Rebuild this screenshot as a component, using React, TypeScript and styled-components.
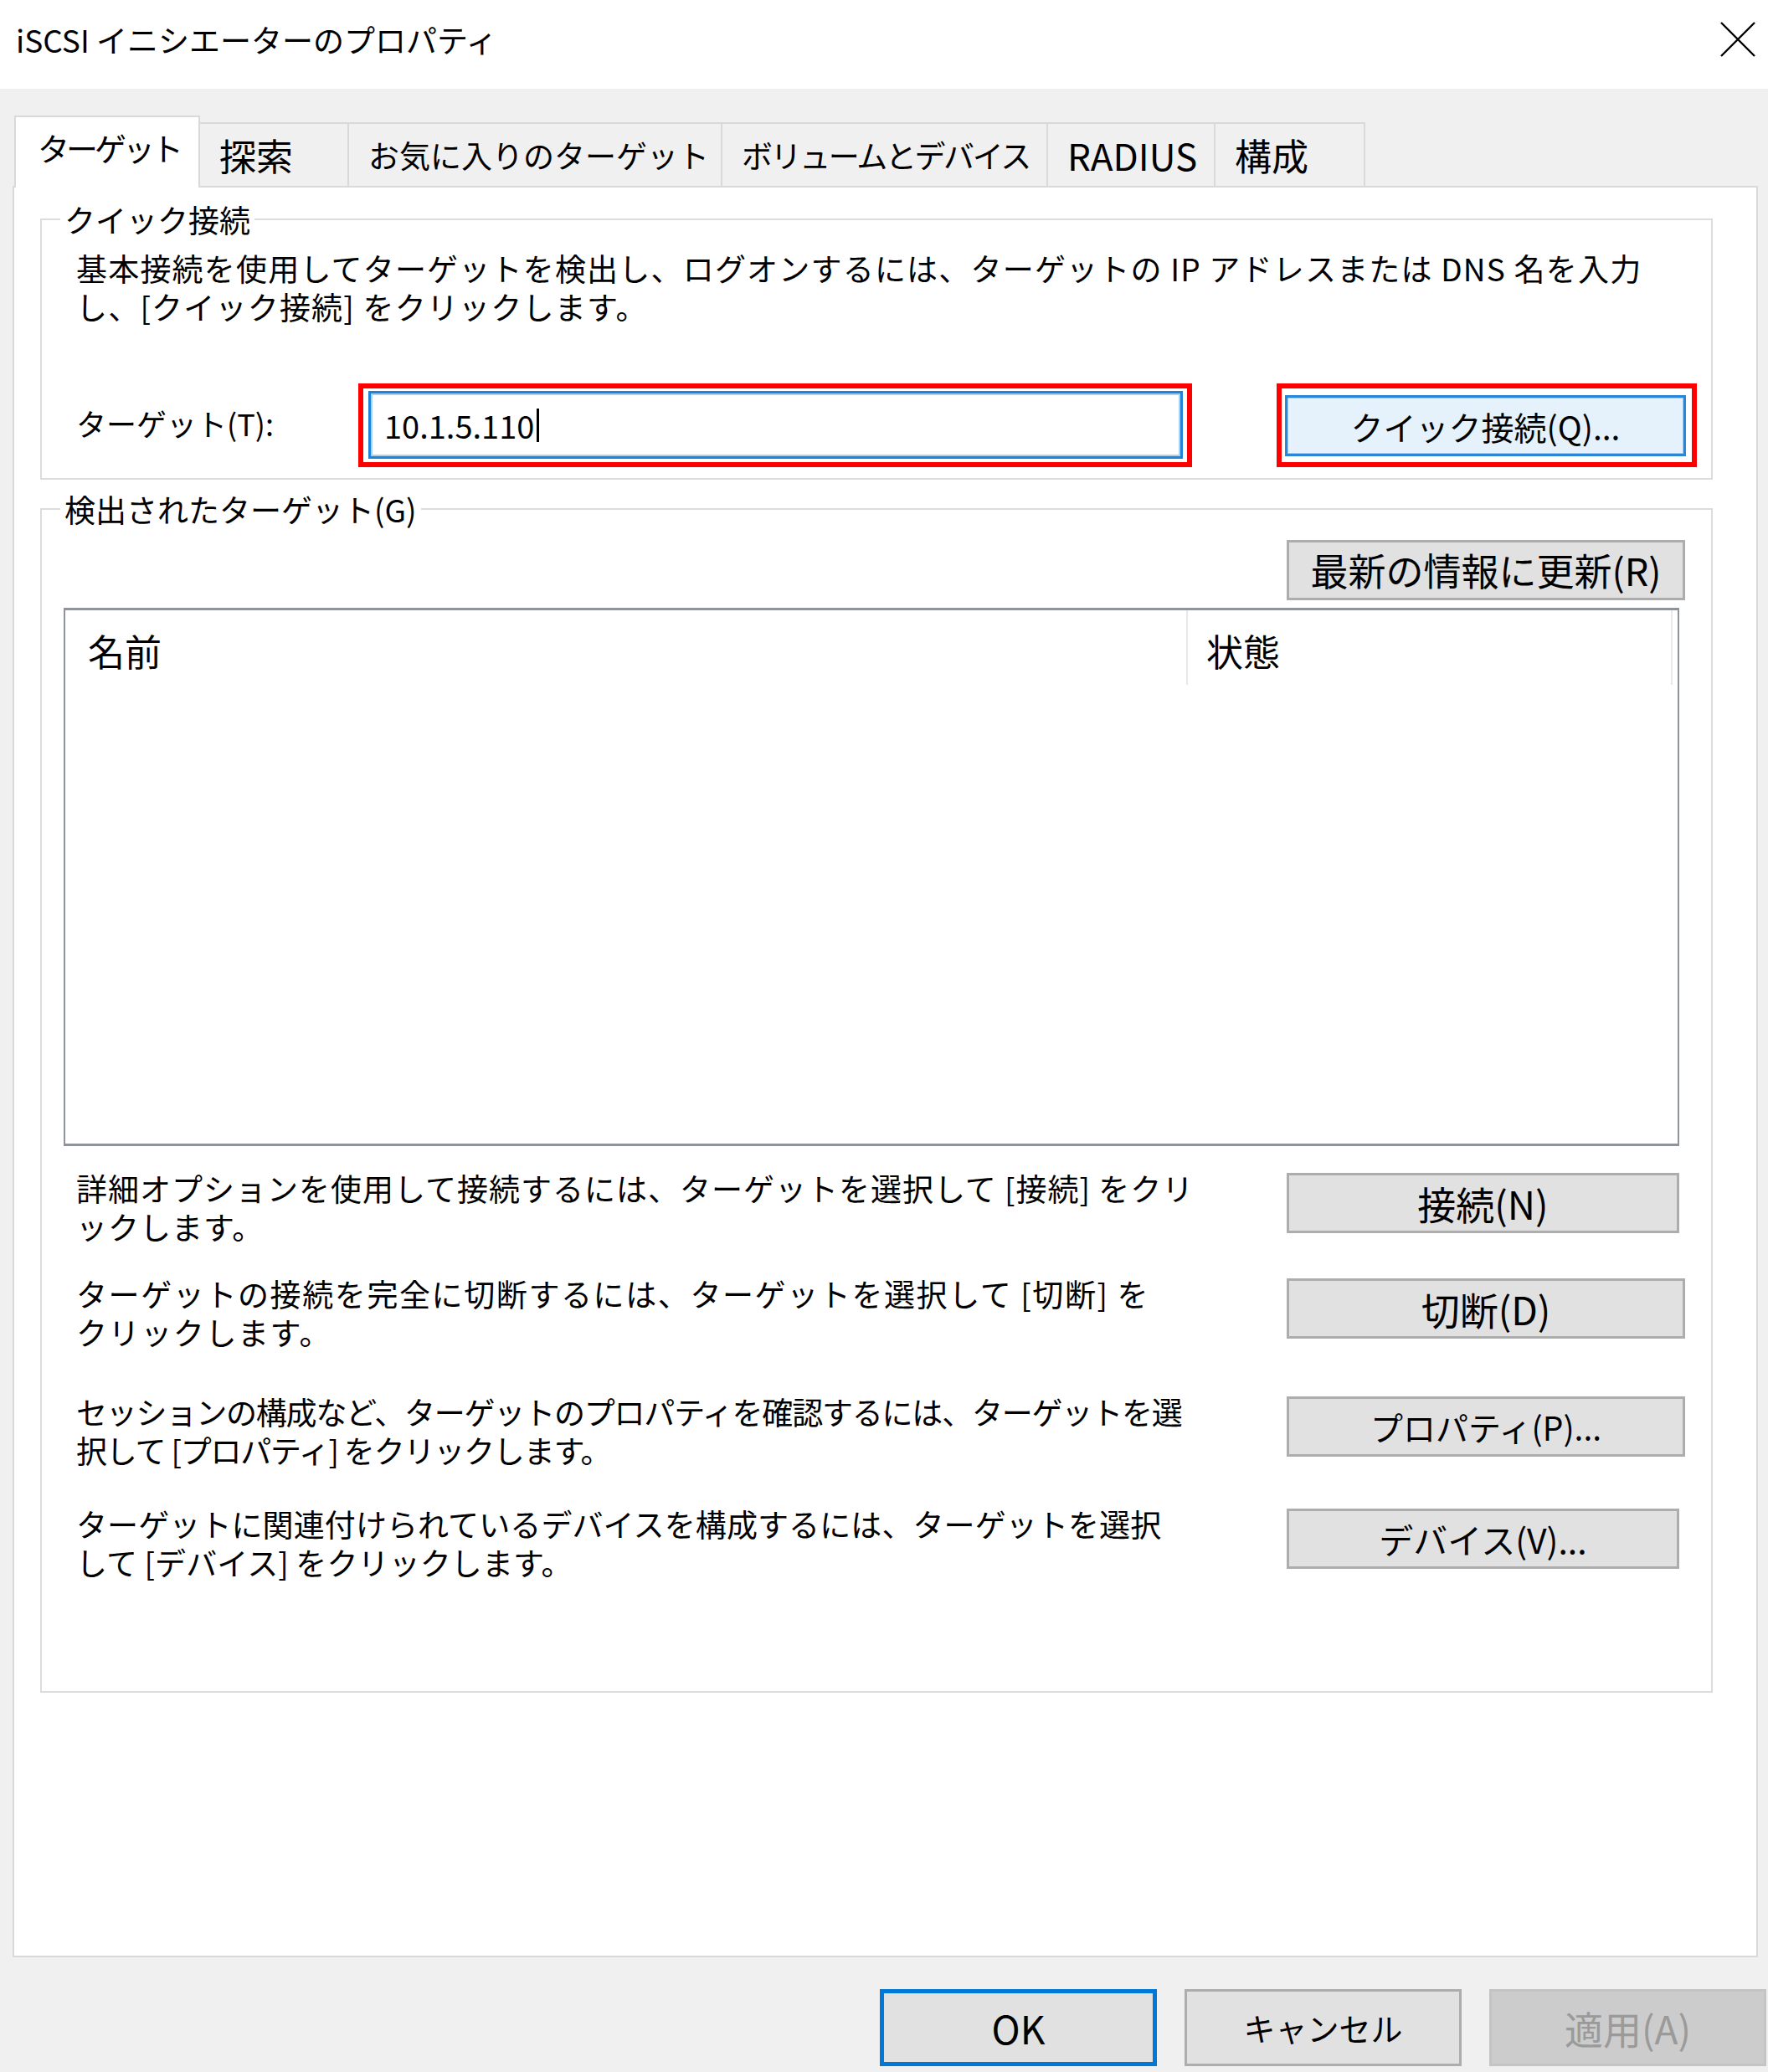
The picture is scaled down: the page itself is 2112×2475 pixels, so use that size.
import React from "react";
import styled, { createGlobalStyle, css } from "styled-components";

const FONT = `"Noto Sans CJK JP", "Noto Sans", sans-serif`;

const GlobalStyle = createGlobalStyle`
  html, body {
    margin: 0;
    padding: 0;
    background: #f0f0f0;
  }
  body {
    font-family: ${FONT};
    font-size: 37px;
    color: #000;
  }
  * { box-sizing: border-box; }
`;

const Window = styled.div`
  width: 2112px;
  height: 2475px;
  overflow: hidden;
  display: flex;
  flex-direction: column;
  background: #f0f0f0;
`;

const TitleBar = styled.div`
  height: 106px;
  flex: none;
  background: #ffffff;
  display: flex;
  align-items: center;
  justify-content: space-between;
  padding: 0 14px 12px 19px;
`;

const TitleText = styled.div`
  font-size: 37px;
  line-height: 46px;
  white-space: nowrap;
`;

const CloseIcon = styled.svg`
  width: 44px;
  height: 44px;
  display: block;
`;

const Body = styled.div`
  flex: 1;
  display: flex;
  flex-direction: column;
  padding: 32px 0 0 15px;
`;

const TabStrip = styled.div`
  display: flex;
  align-items: flex-end;
  padding-left: 2px;
  height: 84px;
`;

const Tab = styled.div<{ $active?: boolean; $w: number; $fs: number; $ls: number }>`
  width: ${(p) => p.$w}px;
  flex: none;
  display: flex;
  align-items: center;
  white-space: nowrap;
  overflow: hidden;
  font-size: ${(p) => p.$fs}px;
  line-height: 50px;
  letter-spacing: ${(p) => p.$ls}px;
  ${(p) =>
    p.$active
      ? css`
          height: 86px;
          margin-bottom: -2px;
          background: #ffffff;
          border: 2px solid #d9d9d9;
          border-bottom: none;
          padding: 0 0 12px 26px;
          position: relative;
          z-index: 1;
        `
      : css`
          height: 76px;
          background: #f0f0f0;
          border-top: 2px solid #d9d9d9;
          border-right: 2px solid #d9d9d9;
          padding: 0 0 0 23px;
        `}
`;

const Panel = styled.div`
  width: 2085px;
  height: 2116px;
  flex: none;
  background: #ffffff;
  border: 2px solid #d9d9d9;
  display: flex;
  flex-direction: column;
`;

const GroupBox = styled.fieldset<{ $mt: number; $pb: number }>`
  margin: ${(p) => p.$mt}px 0 0 31px;
  width: 1998px;
  padding: 0 0 ${(p) => p.$pb}px 0;
  border: 2px solid #dcdcdc;
  min-width: 0;
`;

const Legend = styled.legend`
  margin-left: 22px;
  padding: 0 5px;
  height: 46px;
  line-height: 46px;
  font-size: 37px;
  white-space: nowrap;
`;

const Paragraph = styled.div<{ $ls?: number; $mt: number }>`
  margin-top: ${(p) => p.$mt}px;
  padding-left: 41px;
  letter-spacing: ${(p) => p.$ls ?? 0}px;
`;

const TextLine = styled.div`
  height: 46px;
  line-height: 46px;
  font-size: 37px;
  white-space: nowrap;
`;

const InputRow = styled.div`
  margin-top: 69px;
  padding-left: 41px;
  display: flex;
  align-items: center;
`;

const FieldLabel = styled.div`
  width: 337px;
  flex: none;
  font-size: 36px;
  line-height: 46px;
  white-space: nowrap;
  margin-top: -6px;
`;

const HighlightFrame = styled.div<{ $w: number; $pad: string; $ml?: number }>`
  width: ${(p) => p.$w}px;
  height: 100px;
  flex: none;
  margin-left: ${(p) => p.$ml ?? 0}px;
  border: 6px solid #ff0000;
  padding: ${(p) => p.$pad};
  display: flex;
  background: #ffffff;
`;

const TextBox = styled.div`
  flex: 1;
  height: 100%;
  border: 3px solid #1f83d8;
  box-shadow: inset 0 0 0 2px #a9d1f3;
  background: #ffffff;
  display: flex;
  align-items: center;
  padding-left: 16px;
  line-height: 46px;
  font-size: 38px;
  white-space: nowrap;
`;

const Caret = styled.span`
  display: inline-block;
  width: 3px;
  height: 40px;
  margin-left: 3px;
  background: #000;
`;

type Variant = "normal" | "focus" | "primary" | "disabled";

const PushButton = styled.div<{ $variant?: Variant; $w: number; $h: number; $fs?: number }>`
  width: ${(p) => p.$w}px;
  height: ${(p) => p.$h}px;
  flex: none;
  display: flex;
  align-items: center;
  justify-content: center;
  white-space: nowrap;
  line-height: 50px;
  font-size: ${(p) => p.$fs ?? 46}px;
  ${(p) => {
    switch (p.$variant) {
      case "focus":
        return css`
          background: #e5f1fb;
          border: 3px solid #2a86d9;
          box-shadow: inset 0 0 0 1px #9fcbf1;
          color: #000;
        `;
      case "primary":
        return css`
          background: #e1e1e1;
          border: 5px solid #0078d7;
          color: #000;
        `;
      case "disabled":
        return css`
          background: #cccccc;
          border: 3px solid #c4c4c4;
          color: #9a9a9a;
        `;
      default:
        return css`
          background: #e1e1e1;
          border: 3px solid #adadad;
          color: #000;
        `;
    }
  }}
`;

const ToolbarRow = styled.div`
  margin-top: 14px;
  display: flex;
  justify-content: flex-end;
  padding-right: 31px;
`;

const ListView = styled.div`
  margin: 9px 0 0 26px;
  width: 1930px;
  height: 643px;
  border: 2px solid #8e939c;
  border-top-width: 3px;
  border-bottom-width: 3px;
  background: #ffffff;
`;

const ListHeader = styled.div`
  height: 89px;
  display: flex;
`;

const HeaderCell = styled.div<{ $w: number; $pl: number }>`
  width: ${(p) => p.$w}px;
  flex: none;
  height: 100%;
  padding: 6px 0 0 ${(p) => p.$pl}px;
  border-right: 2px solid #e8e8e8;
  display: flex;
  align-items: center;
  font-size: 44px;
  line-height: 50px;
  white-space: nowrap;
`;

const ActionRow = styled.div<{ $mt: number }>`
  margin-top: ${(p) => p.$mt}px;
  padding-left: 41px;
  display: flex;
  align-items: flex-start;
`;

const ActionText = styled.div<{ $ls?: number }>`
  width: 1446px;
  flex: none;
  letter-spacing: ${(p) => p.$ls ?? 0}px;
`;

const ActionButtonSlot = styled.div`
  margin-top: 5px;
`;

const Footer = styled.div`
  margin-top: 38px;
  display: flex;
  justify-content: flex-end;
  gap: 33px;
  padding-right: 2px;
`;

const tabs = [
  { label: "ターゲット", w: 222, fs: 38, ls: -4, active: true },
  { label: "探索", w: 178, fs: 44, ls: 0 },
  { label: "お気に入りのターゲット", w: 446, fs: 37, ls: 0 },
  { label: "ボリュームとデバイス", w: 389, fs: 37, ls: -2.4 },
  { label: "RADIUS", w: 200, fs: 44, ls: 0 },
  { label: "構成", w: 179, fs: 44, ls: 0 },
];

const actions = [
  {
    lines: ["詳細オプションを使用して接続するには、ターゲットを選択して [接続] をクリ", "ックします。"],
    button: "接続(N)",
    w: 469,
    fs: 46,
    mt: 27,
    ls: 1,
  },
  {
    lines: ["ターゲットの接続を完全に切断するには、ターゲットを選択して [切断] を", "クリックします。"],
    button: "切断(D)",
    w: 476,
    fs: 46,
    mt: 34,
    ls: 1.6,
  },
  {
    lines: ["セッションの構成など、ターゲットのプロパティを確認するには、ターゲットを選", "択して [プロパティ] をクリックします。"],
    button: "プロパティ(P)...",
    w: 476,
    fs: 39,
    mt: 49,
    ls: -1.2,
  },
  {
    lines: ["ターゲットに関連付けられているデバイスを構成するには、ターゲットを選択", "して [デバイス] をクリックします。"],
    button: "デバイス(V)...",
    w: 469,
    fs: 41,
    mt: 42,
    ls: 0.1,
  },
];

export default function App() {
  return (
    <>
      <GlobalStyle />
      <Window>
        <TitleBar>
          <TitleText>iSCSI イニシエーターのプロパティ</TitleText>
          <CloseIcon viewBox="0 0 44 44">
            <path d="M2 2 L42 42 M42 2 L2 42" stroke="#000" strokeWidth="2.4" fill="none" />
          </CloseIcon>
        </TitleBar>
        <Body>
          <TabStrip>
            {tabs.map((t) => (
              <Tab key={t.label} $active={t.active} $w={t.w} $fs={t.fs} $ls={t.ls}>
                {t.label}
              </Tab>
            ))}
          </TabStrip>
          <Panel>
            <GroupBox $mt={15} $pb={13}>
              <Legend>クイック接続</Legend>
              <Paragraph $mt={12} $ls={1.2}>
                <TextLine>
                  基本接続を使用してターゲットを検出し、ログオンするには、ターゲットの IP アドレスまたは DNS 名を入力
                </TextLine>
                <TextLine>し、[クイック接続] をクリックします。</TextLine>
              </Paragraph>
              <InputRow>
                <FieldLabel>ターゲット(T):</FieldLabel>
                <HighlightFrame $w={996} $pad="3px 5px 4px 6px">
                  <TextBox>
                    10.1.5.110
                    <Caret />
                  </TextBox>
                </HighlightFrame>
                <HighlightFrame $w={502} $pad="8px 7px 7px 4px" $ml={101}>
                  <PushButton $variant="focus" $w={479} $h={73} $fs={39}>
                    クイック接続(Q)...
                  </PushButton>
                </HighlightFrame>
              </InputRow>
            </GroupBox>
            <GroupBox $mt={12} $pb={131}>
              <Legend>検出されたターゲット(G)</Legend>
              <ToolbarRow>
                <PushButton $w={476} $h={72} $fs={45}>
                  最新の情報に更新(R)
                </PushButton>
              </ToolbarRow>
              <ListView>
                <ListHeader>
                  <HeaderCell $w={1341} $pl={27}>
                    名前
                  </HeaderCell>
                  <HeaderCell $w={579} $pl={22}>
                    状態
                  </HeaderCell>
                </ListHeader>
              </ListView>
              {actions.map((a) => (
                <ActionRow key={a.button} $mt={a.mt}>
                  <ActionText $ls={a.ls}>
                    <TextLine>{a.lines[0]}</TextLine>
                    <TextLine>{a.lines[1]}</TextLine>
                  </ActionText>
                  <ActionButtonSlot>
                    <PushButton $w={a.w} $h={72} $fs={a.fs}>
                      {a.button}
                    </PushButton>
                  </ActionButtonSlot>
                </ActionRow>
              ))}
            </GroupBox>
          </Panel>
          <Footer>
            <PushButton $variant="primary" $w={331} $h={92}>
              OK
            </PushButton>
            <PushButton $w={331} $h={92} $fs={38}>
              キャンセル
            </PushButton>
            <PushButton $variant="disabled" $w={331} $h={92}>
              適用(A)
            </PushButton>
          </Footer>
        </Body>
      </Window>
    </>
  );
}
